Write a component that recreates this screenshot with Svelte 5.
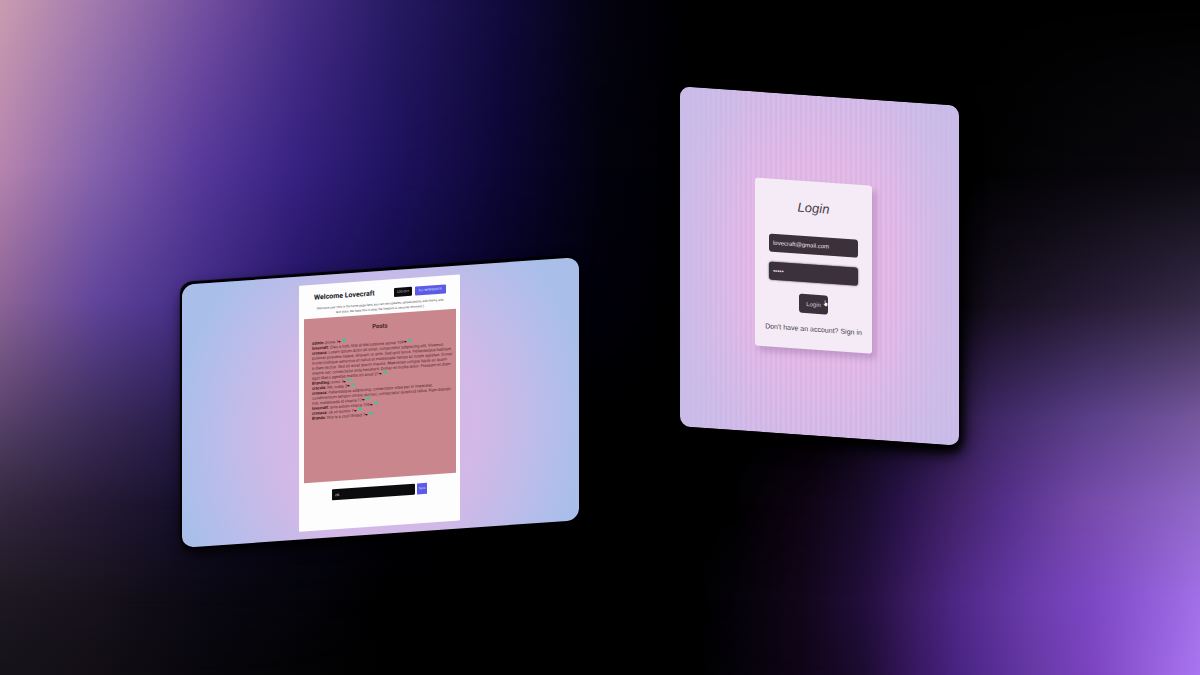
<script lang="ts">
  const posts = [
    { user: 'admin', text: 'prova', score: '1' },
    { user: 'lovecraft', text: 'Ciao a tutti, title al discussione server', score: '104' },
    { user: 'cronaca', text: 'Lorem ipsum dolor sit amet, consectetur adipiscing elit. Vivamus pulvinar posuere neque, aliquam ut ante. Sed quis lacus. Pellentesque habitant morbi tristique senectus et netus et malesuada fames ac turpis egestas. Donec a diam lectus. Sed sit amet ipsum mauris. Maecenas congue ligula ac quam viverra nec consectetur ante hendrerit. Donec et mollis dolor. Praesent et diam eget libero egestas mattis sit amet', score: '21' },
    { user: 'Brandling', text: 'sono', score: '7' },
    { user: 'cracola', text: 'Nb, today', score: '2' },
    { user: 'cronaca', text: 'Pellentesque adipiscing, consectetur vitae per in imperdiet, condimentum tempor ornare dui nec, consectetur euismod tellus. Nam blandit nisi, malesuada id viverra', score: '17' },
    { user: 'lovecraft', text: 'quis autem vivace', score: '104' },
    { user: 'cronaca', text: 'ok un bonito', score: '7' },
    { user: 'Brando', text: 'this is a cool thread', score: '7' }
  ];
  let email = $state('lovecraft@gmail.com');
  let password = $state('craft');
  let draft = $state('ok');
</script>

<main>
  <div class="glow" aria-hidden="true">
    <i class="r1"></i><i class="r2"></i><i class="r3"></i><i class="r4"></i><i class="r5"></i><i class="r6"></i><i class="r7"></i>
  </div>

  <section class="screen feed">
    <div class="page">
      <header>
        <h1>Welcome Lovecraft</h1>
        <div class="actions">
          <button class="dark">LOG OUT</button>
          <button class="blue">ALL MEMBERS ☰</button>
        </div>
      </header>
      <p class="intro">Welcome user! this is the home page feed, you can see updates, upload photos, edit theme, add text story. We hope this is okay, the freedom is securely removed :)</p>
      <div class="posts">
        <h2>Posts</h2>
        <ul>
          {#each posts as post}
            <li><b>{post.user}:</b> {post.text} {post.score}<b class="heart">❤</b><span class="dot"></span></li>
          {/each}
        </ul>
      </div>
      <form class="compose">
        <input class="dark" aria-label="New post" bind:value={draft} />
        <button type="button" class="blue">Send</button>
      </form>
    </div>
  </section>

  <section class="screen signin">
    <form class="card">
      <h1>Login</h1>
      <input type="text" aria-label="Email" bind:value={email} />
      <input class="focus" type="password" aria-label="Password" bind:value={password} />
      <button type="button">
        Login
        <svg viewBox="0 0 12 16" aria-hidden="true"><path d="M4 9V2q1-2 2 0v5l4 1q2 1 1 4l-1 4H5L1 11q0-2 3 0z" fill="#fff" stroke="#222" stroke-width=".6" /></svg>
      </button>
      <p>Don't have an account? <a href="#signin">Sign in</a></p>
    </form>
  </section>
</main>

<style>
  :global(body) { margin: 0; background: #000; }
  * { box-sizing: border-box; }
  h1, h2, p, ul { margin: 0; padding: 0; }
  ul { list-style: none; }
  button, input { border: 0; margin: 0; padding: 0; font: inherit; min-width: 0; }

  main {
    position: relative;
    display: grid;
    grid-template-columns: 182fr 397fr 101fr 279fr 241fr;
    align-items: start;
    min-height: 100vh;
    overflow: hidden;
    font-family: Roboto, "Liberation Sans", sans-serif;
  }

  .glow, .glow i { position: absolute; inset: 0; }
  .r1 { background: linear-gradient(90deg, #cb9cb0, #a27aae 8%, #7450a0 17%, #472e86 25%, #261a62 33%, #100a3c 42%, #040310 50%, #000 58%); }
  .r2 {
    background: linear-gradient(90deg, #b684ae, #8462ac 8%, #56389a 17%, #352180 25%, #1e125e 33%, #0c0634 42%, #02020e 50%, #000 58%, #000 80%, #060509 90%, #0b090e);
    mask: linear-gradient(transparent, #000 25%);
  }
  .r3 {
    background: linear-gradient(90deg, #8c6496, #60449a 8%, #402a84 17%, #241464 25%, #120a48 33%, #060322 42%, #01000a 50%, #000 58%, #000 78%, #150f1e 83%, #251b33 91%, #352b48);
    mask: linear-gradient(transparent 25%, #000 45%);
  }
  .r4 {
    background: linear-gradient(90deg, #58426a, #3c2c5a 8%, #221848 17%, #0f082c 25%, #07041c 33%, #02010c 42%, #000 50%, #000 68%, #1c0f30 76%, #402866 83%, #5a408a 91%, #76589e);
    mask: linear-gradient(transparent 45%, #000 62%);
  }
  .r5 {
    background: linear-gradient(90deg, #33283e, #241a34 8%, #120d28 17%, #070514 25%, #020208 33%, #000 42%, #000 61%, #0e0414 67%, #1a0c2c 72%, #281248 75%, #44246c 80%, #56308c 84%, #7448a8 90%, #9068c8);
    mask: linear-gradient(transparent 62%, #000 75%);
  }
  .r6 {
    background: linear-gradient(90deg, #1d1821, #17121c 8%, #0a0812 17%, #04040a 25%, #000 33%, #000 58%, #040208 61%, #12061a 67%, #220e3c 72%, #341858 75%, #502888 80%, #6a3cac 86%, #7c48c4 91%, #a270e8);
    mask: linear-gradient(transparent 75%, #000 89%);
  }
  .r7 {
    background: linear-gradient(90deg, #16131a, #120e14 8%, #08070c 17%, #030305 25%, #000 33%, #000 58%, #040208 61%, #100418 67%, #1c0c30 72%, #301454 75%, #4a2484 80%, #6638a4 86%, #7c44c0 91%, #aa76f0);
    mask: linear-gradient(transparent 89%, #000);
  }

  .screen { position: relative; display: grid; justify-items: center; }

  .feed {
    grid-column: 2;
    margin-top: 271px;
    padding: 9px 2px 8px 0;
    border-radius: 12px;
    background: radial-gradient(ellipse 52% 90% at 50% 60%, #dcb5e5, #d1b9e7 50%, #b5bdea 85%, #a9bfea);
    box-shadow: -2px -3px 1px #000, -1px 2px 2px #000, 2px 6px 16px #000;
    transform: skewY(-4deg);
  }
  .page {
    display: flex;
    flex-direction: column;
    width: 161px;
    min-height: 246px;
    padding: 8px 4px 0 5px;
    border-radius: 1px;
    background: #fdfdfe;
    font-size: 4px;
    line-height: 5px;
    color: #4c4850;
  }
  header { display: flex; align-items: center; justify-content: space-between; padding: 0 10px; height: 10px; }
  .page h1 { font-size: 7px; line-height: 10px; color: #17161a; white-space: nowrap; }
  .actions { display: flex; gap: 3px; }
  .actions button { width: 18px; height: 9px; border-radius: 1px; font-size: 3px; line-height: 9px; white-space: nowrap; }
  .actions .blue { width: 31px; }
  .dark { background: #0c0b0e; color: #c8c8cc; }
  .blue { background: #5b5be8; color: #d4dcff; }
  .intro { padding: 4px 12px 2px; text-align: center; font-size: 3px; }
  .posts { height: 164px; padding: 9px 1px 0 8px; background: #ca868d; color: #54282f; }
  .posts h2 { margin-bottom: 7px; padding-right: 7px; text-align: center; font-size: 6px; line-height: 6px; color: #3c1820; }
  .posts b { color: #35131c; }
  .posts .heart { font-size: 3px; line-height: 3px; }
  .dot { display: inline-block; width: 4px; height: 3px; margin-left: 1px; border-radius: 50%; background: #48c095; vertical-align: top; }
  .compose { display: flex; gap: 2px; margin-top: 8px; padding-left: 28px; }
  .compose input { width: 83px; height: 11px; padding: 0 3px; border-radius: 1px; }
  .compose button { width: 10px; height: 11px; font-size: 3px; }

  .signin {
    grid-column: 4;
    align-items: center;
    margin-top: 96px;
    padding: 86px 12px 86px 0;
    border-radius: 10px;
    background:
      linear-gradient(90deg, rgb(202 188 233 / .7), transparent 25%, transparent 75%, rgb(202 188 233 / .7)),
      repeating-linear-gradient(90deg, rgb(190 165 220 / .25) 0 2px, transparent 2px 5px),
      radial-gradient(ellipse 65% 65% at 50% 50%, #ebb8e5, #e3bae7 50%, #cbbde9);
    box-shadow: 3px 6px 8px #000, 2px 8px 20px #000;
    transform: skewY(4deg);
    font-family: "Liberation Sans", sans-serif;
  }
  .card {
    display: flex;
    flex-direction: column;
    align-items: center;
    width: 117px;
    min-height: 168px;
    padding: 18px 10px 14px;
    border-radius: 3px;
    background: #f5ebf6;
    box-shadow: 4px 5px 6px rgb(130 90 150 / .35);
    color: #433a47;
  }
  .card h1 { margin-bottom: 19px; font-size: 13px; line-height: 18px; font-style: italic; font-weight: 400; }
  .card input { width: 89px; height: 18px; margin-bottom: 10px; padding: 0 4px; border-radius: 3px; background: #3c303b; color: #ece0ec; font-size: 6px; }
  .card .focus { box-shadow: 0 0 2px #3c303b; }
  .card button { position: relative; width: 29px; height: 19px; margin-top: 2px; border-radius: 3px; background: #3c303b; color: #ddd0dd; font-size: 6px; }
  .card svg { position: absolute; top: 3px; right: 0; width: 5px; height: 9px; }
  .card p { margin-top: 10px; font-size: 7px; line-height: 12px; white-space: nowrap; }
  .card a { color: inherit; text-decoration: none; }
</style>
